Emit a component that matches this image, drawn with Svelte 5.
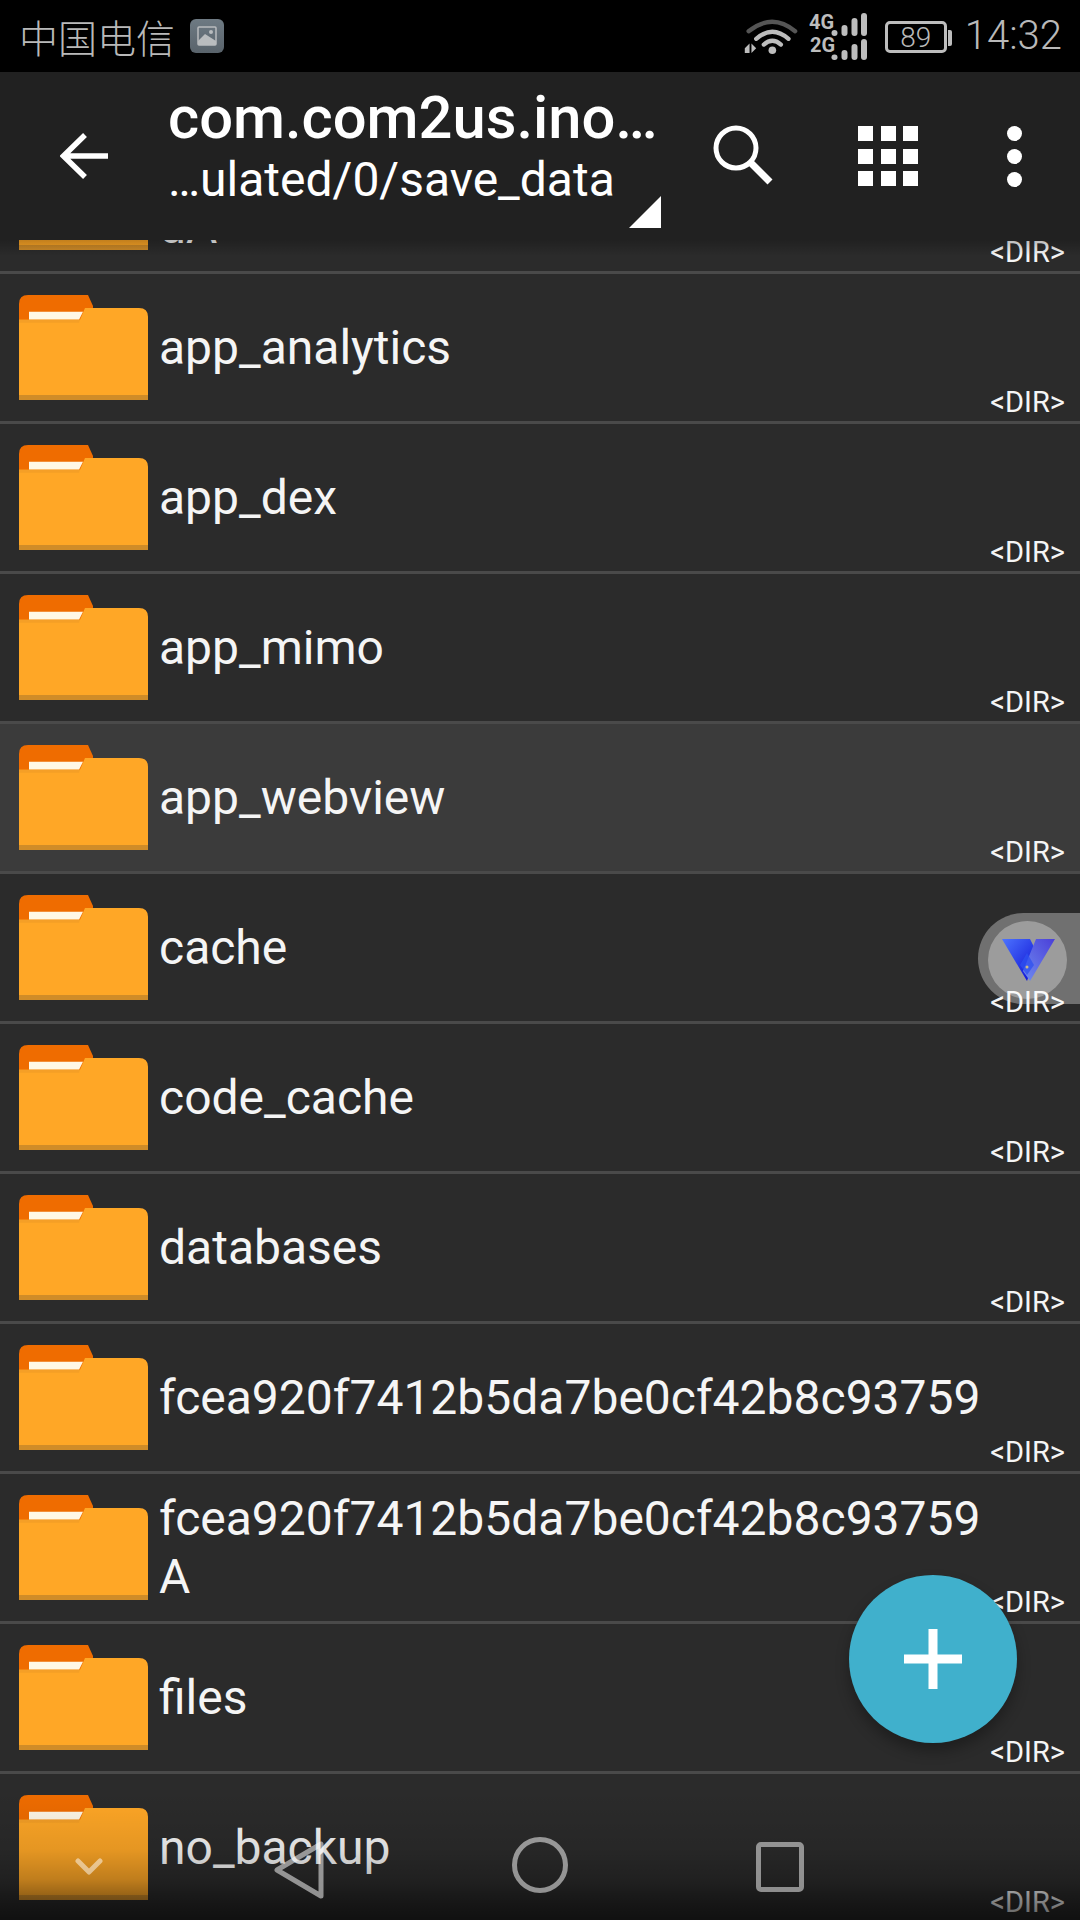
<script>
  const rows = [
    { name: 'dA', continued: true },
    { name: 'app_analytics' },
    { name: 'app_dex' },
    { name: 'app_mimo' },
    { name: 'app_webview', selected: true },
    { name: 'cache' },
    { name: 'code_cache' },
    { name: 'databases' },
    { name: 'fcea920f7412b5da7be0cf42b8c93759' },
    { name: 'fcea920f7412b5da7be0cf42b8c93759A' },
    { name: 'files' },
    { name: 'no_backup' }
  ];
  const grid = [0, 1, 2, 3, 4, 5, 6, 7, 8];
</script>

<div class="screen">
  <header class="top">
    <div class="status">
      <div class="status-left">
        <span class="carrier">中国电信</span>
        <svg class="note" viewBox="0 0 34 34" width="34" height="34">
          <defs>
            <linearGradient id="noteBg" x1="0" y1="0" x2="0" y2="1">
              <stop offset="0" stop-color="#6e7a83" />
              <stop offset="1" stop-color="#59636b" />
            </linearGradient>
          </defs>
          <rect width="34" height="34" rx="6" fill="url(#noteBg)" />
          <rect x="8" y="8" width="18" height="18" rx="1" fill="none" stroke="#b9bcbe" stroke-width="1.5" />
          <path d="M8 22 L15 15 L26 22 V26 H8 Z" fill="#b9bcbe" />
          <circle cx="21" cy="13" r="2" fill="#b9bcbe" />
        </svg>
      </div>
      <div class="status-right">
        <svg class="wifi" viewBox="0 0 60 40" width="57" height="38">
          <g fill="none" stroke-linecap="round" stroke-width="4.5">
            <path d="M8 15 Q33 -5 57 15" stroke="#555" />
            <path d="M16 23 Q33 8 50 23" stroke="#bdbdbd" />
            <path d="M24 29 Q33 21 42 29" stroke="#bdbdbd" />
          </g>
          <circle cx="33" cy="35" r="4" fill="#bdbdbd" />
          <path d="M4 33 L9 28 V38 H4 Z M11 28 L16 33 L11 38 Z" fill="#bdbdbd" />
        </svg>
        <svg class="signal" viewBox="0 0 62 48" width="62" height="48">
          <text x="0" y="17" class="net">4G</text>
          <text x="1" y="40" class="net">2G</text>
          <g fill="#bdbdbd">
            <rect x="22.5" y="18" width="6" height="6" rx="3" />
            <rect x="32.5" y="13" width="6" height="11" rx="3" />
            <rect x="42.5" y="6" width="6" height="18" rx="3" />
            <rect x="52" y="1" width="6" height="23" rx="3" />
            <rect x="22.5" y="42.5" width="6" height="5.5" rx="2.7" />
            <rect x="32.5" y="38" width="6" height="10" rx="3" />
            <rect x="42.5" y="32" width="6" height="16" rx="3" />
            <rect x="52" y="27" width="6" height="21" rx="3" />
          </g>
        </svg>
        <div class="battery"><span>89</span></div>
        <span class="time">14:32</span>
      </div>
    </div>
    <div class="toolbar">
      <button class="back" aria-label="Back">
        <svg viewBox="0 0 48 48" width="48" height="48">
          <path d="M48 24 H4 M25 3 L3.5 24 L25 45" fill="none" stroke="#fff" stroke-width="5.5" />
        </svg>
      </button>
      <div class="titles">
        <div class="title">com.com2us.ino…</div>
        <div class="subtitle">…ulated/0/save_data</div>
        <svg class="corner" viewBox="0 0 32 32" width="32" height="32"><path d="M32 0 V32 H0 Z" fill="#fff" /></svg>
      </div>
      <svg class="search" viewBox="0 0 62 62" width="62" height="62">
        <circle cx="24" cy="24" r="20" fill="none" stroke="#fff" stroke-width="5" />
        <path d="M38 38 L58 58" stroke="#fff" stroke-width="7" />
      </svg>
      <div class="grid">
        {#each grid as g (g)}<span></span>{/each}
      </div>
      <div class="dots"><span></span><span></span><span></span></div>
    </div>
  </header>

  <main class="list">
    {#each rows as row (row.name)}
      <div class="row" class:selected={row.selected}>
        <svg class="folder" viewBox="0 0 129 106" width="129" height="105" preserveAspectRatio="none">
          <path d="M0 9 Q0 0 9 0 H69 L74 11 V32 H0 Z" fill="#ef6c00" />
          <path d="M10 17 H64 L60 25 H10 Z" fill="#fff8e6" />
          <path d="M0 25 H61 L66 13 H120 Q129 13 129 22 V106 H0 Z" fill="#ffa726" />
          <path d="M0 25 H61 L60 28 H0 Z" fill="#f59f26" />
          <path d="M0 101 H129 V106 H0 Z" fill="#d08c28" />
        </svg>
        <div class="name" class:continued={row.continued}>{row.name}</div>
        <div class="dir">&lt;DIR&gt;</div>
      </div>
    {/each}
  </main>

  <div class="bubble">
    <div class="bubble-inner">
      <svg viewBox="0 0 53 42" width="53" height="42">
        <defs>
          <linearGradient id="vL" x1="0" y1="0" x2="1" y2="1">
            <stop offset="0" stop-color="#4d74ff" />
            <stop offset="1" stop-color="#0a0ad0" />
          </linearGradient>
          <linearGradient id="vR" x1="0" y1="1" x2="1" y2="0">
            <stop offset="0" stop-color="#6f8cf0" />
            <stop offset="1" stop-color="#4a3fd8" />
          </linearGradient>
        </defs>
        <path d="M0 0 H28 L35 14 L25 42 Z" fill="url(#vL)" />
        <path d="M34 0 H53 L28 42 L21 32 Z" fill="url(#vR)" />
        <path d="M25 14 L32 26 L25 36 L18 26 Z" fill="#2d50f0" opacity=".75" />
        <circle cx="25" cy="28" r="1.5" fill="#c9b98a" />
      </svg>
    </div>
  </div>

  <button class="fab" aria-label="Add">
    <svg viewBox="0 0 58 60" width="58" height="60">
      <path d="M29 0 V60 M0 30 H58" stroke="#fff" stroke-width="9" />
    </svg>
  </button>

  <nav class="nav">
    <svg class="chev" viewBox="0 0 28 20" width="28" height="20">
      <path d="M3 4 L14 15 L25 4" fill="none" stroke="#fff" stroke-opacity=".5" stroke-width="5" stroke-linecap="round" stroke-linejoin="round" />
    </svg>
    <svg class="nav-back" viewBox="0 0 52 60" width="52" height="60">
      <path d="M3 30 L47 4 V56 Z" fill="none" stroke="#fff" stroke-opacity=".52" stroke-width="5" stroke-linejoin="round" />
    </svg>
    <svg class="nav-home" viewBox="0 0 56 56" width="56" height="56">
      <circle cx="28" cy="28" r="25.5" fill="none" stroke="#fff" stroke-opacity=".52" stroke-width="5" />
    </svg>
    <svg class="nav-recent" viewBox="0 0 48 50" width="48" height="50">
      <rect x="2.5" y="2.5" width="43" height="45" rx="2.5" fill="none" stroke="#fff" stroke-opacity=".5" stroke-width="5" />
    </svg>
  </nav>
</div>

<style>
  :global(body) {
    margin: 0;
    background: #2b2b2b;
  }
  .screen {
    position: relative;
    width: 1080px;
    height: 1920px;
    overflow: hidden;
    background: #2b2b2b;
    font-family: Roboto, "Noto Sans CJK SC", sans-serif;
    color: #fff;
  }
  .top {
    position: relative;
    z-index: 2;
  }
  .top::after {
    content: "";
    position: absolute;
    left: 0;
    right: 0;
    top: 100%;
    height: 16px;
    background: linear-gradient(rgba(0, 0, 0, 0.24), rgba(0, 0, 0, 0));
  }
  .status {
    height: 72px;
    background: #000;
    display: flex;
    justify-content: space-between;
    align-items: center;
    padding: 0 18px 0 19px;
    color: #b9b9b9;
  }
  .status-left {
    display: flex;
    align-items: center;
    gap: 15px;
  }
  .carrier {
    font-family: "Noto Sans CJK SC", sans-serif;
    font-size: 39px;
    font-weight: 300;
    line-height: 1;
  }
  .status-right {
    display: flex;
    align-items: center;
  }
  .wifi {
    margin-right: 11px;
  }
  .signal {
    margin-right: 14px;
  }
  .net {
    font: 700 20px Roboto, sans-serif;
    fill: #bdbdbd;
  }
  .battery {
    position: relative;
    box-sizing: border-box;
    width: 62px;
    height: 32px;
    border: 3px solid #bdbdbd;
    border-radius: 5px;
    margin: 2px 18px 0 0;
    display: flex;
    align-items: center;
    justify-content: center;
    font-size: 28px;
    font-weight: 300;
  }
  .battery::after {
    content: "";
    position: absolute;
    right: -8px;
    top: 6px;
    width: 4px;
    height: 16px;
    background: #bdbdbd;
    border-radius: 0 2px 2px 0;
  }
  .time {
    font-size: 40px;
    font-weight: 300;
    line-height: 1;
  }
  .toolbar {
    height: 168px;
    background: #212121;
    display: flex;
    align-items: flex-start;
  }
  .back {
    background: none;
    border: 0;
    padding: 0;
    width: 48px;
    height: 48px;
    margin: 60px 0 0 60px;
    line-height: 0;
  }
  .titles {
    position: relative;
    width: 526px;
    margin-left: 60px;
    padding-top: 12px;
    height: 156px;
  }
  .title {
    font-size: 59.7px;
    font-weight: 500;
    line-height: 68px;
    white-space: nowrap;
  }
  .subtitle {
    font-size: 48px;
    line-height: 56px;
    white-space: nowrap;
  }
  .corner {
    position: absolute;
    left: 461px;
    top: 124px;
  }
  .search {
    margin: 52px 0 0 18px;
  }
  .grid {
    display: grid;
    grid-template-columns: repeat(3, 15px);
    gap: 7.5px;
    margin: 54px 0 0 84px;
  }
  .grid span {
    height: 15px;
    background: #fff;
  }
  .dots {
    display: flex;
    flex-direction: column;
    gap: 8px;
    margin: 54px 0 0 89px;
  }
  .dots span {
    width: 15px;
    height: 15px;
    border-radius: 50%;
    background: #fff;
  }
  .list {
    margin-top: -116px;
  }
  .row {
    box-sizing: border-box;
    height: 150px;
    border-bottom: 3px solid #4a4a4a;
    display: grid;
    grid-template-columns: 129px 1fr auto;
    align-items: center;
    padding: 0 15px 0 19px;
    background: #2b2b2b;
  }
  .row.selected {
    background: #3b3b3b;
  }
  .folder {
    display: block;
  }
  .name {
    width: 826px;
    margin-left: 11px;
    font-size: 48px;
    line-height: 58px;
    color: #f5f5f5;
    word-break: break-all;
  }
  .name.continued {
    padding-top: 58px;
  }
  .dir {
    align-self: end;
    font-size: 29px;
    line-height: 30px;
    padding-bottom: 4px;
    color: #f5f5f5;
  }
  .bubble {
    position: absolute;
    z-index: 1;
    left: 978px;
    top: 913px;
    width: 102px;
    height: 91px;
    border-radius: 46px 0 0 46px;
    background: rgba(255, 255, 255, 0.33);
    display: flex;
    align-items: center;
    padding: 2px 0 0 10px;
    box-sizing: border-box;
  }
  .bubble-inner {
    width: 78px;
    height: 78px;
    border-radius: 50%;
    background: rgba(255, 255, 255, 0.31);
    display: flex;
    align-items: center;
    justify-content: center;
    padding-left: 1px;
  }
  .fab {
    position: absolute;
    z-index: 3;
    left: 849px;
    top: 1575px;
    width: 168px;
    height: 168px;
    border: 0;
    padding: 0;
    border-radius: 50%;
    background: #40b0cc;
    box-shadow: 0 8px 14px rgba(0, 0, 0, 0.3);
    display: flex;
    align-items: center;
    justify-content: center;
  }
  .nav {
    position: absolute;
    z-index: 2;
    left: 0;
    right: 0;
    bottom: 0;
    height: 130px;
    background: linear-gradient(
      rgba(0, 0, 0, 0),
      rgba(0, 0, 0, 0.1) 46%,
      rgba(0, 0, 0, 0.25) 69%,
      rgba(0, 0, 0, 0.46) 85%,
      rgba(0, 0, 0, 0.62)
    );
  }
  .nav svg {
    position: absolute;
  }
  .chev {
    left: 75px;
    top: 67px;
  }
  .nav-back {
    left: 274px;
    top: 50px;
  }
  .nav-home {
    left: 512px;
    top: 47px;
  }
  .nav-recent {
    left: 756px;
    top: 52px;
  }
</style>
